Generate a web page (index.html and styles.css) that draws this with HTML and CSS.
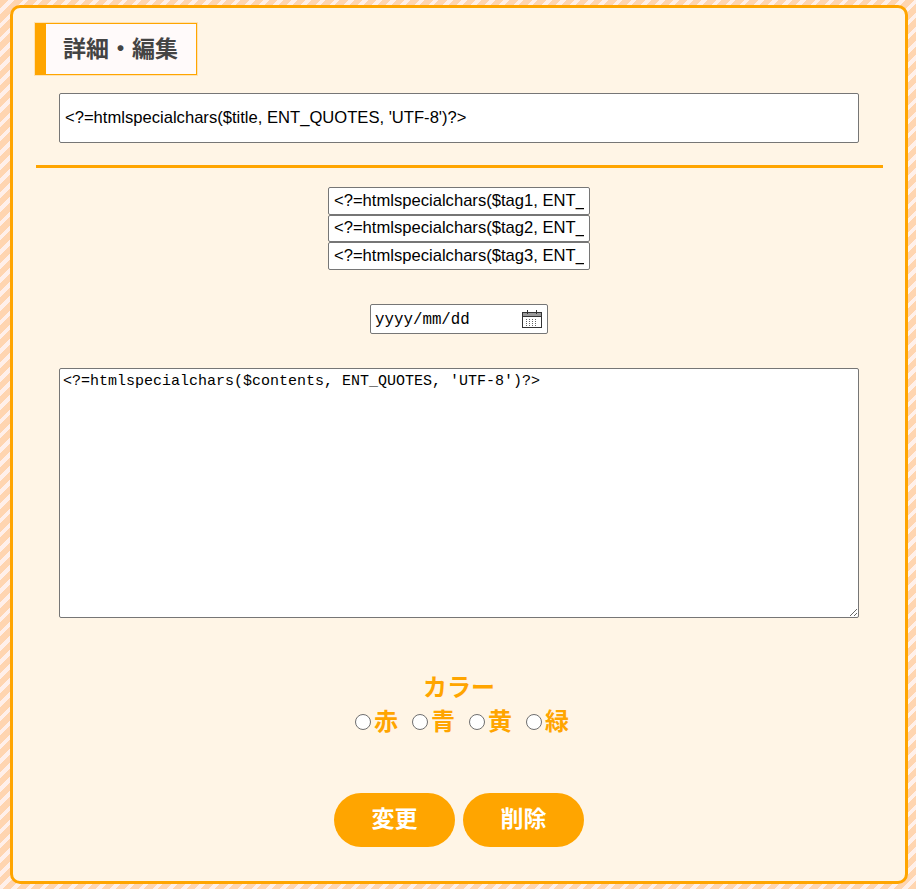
FILE: index.html
```html
<!DOCTYPE html>
<html lang="ja">
<head>
    <meta charset="UTF-8">
    <meta name="viewport" content="width=device-width, initial-scale=1.0">
    <title>詳細・編集</title>
    <link rel="stylesheet" href="styles.css">
</head>
<body>
    <main class="panel">
        <h1 class="page-title">詳細・編集</h1>

        <form class="edit-form">
            <div class="title-row">
                <input class="title-input" type="text" value="<?=htmlspecialchars($title, ENT_QUOTES, 'UTF-8')?>">
            </div>
            <hr class="divider">

            <div class="tags">
                <input class="tag-input" type="text" value="<?=htmlspecialchars($tag1, ENT_QUOTES, 'UTF-8')?>">
                <input class="tag-input" type="text" value="<?=htmlspecialchars($tag2, ENT_QUOTES, 'UTF-8')?>">
                <input class="tag-input" type="text" value="<?=htmlspecialchars($tag3, ENT_QUOTES, 'UTF-8')?>">
            </div>

            <div class="date-row">
                <div class="date-input">
                    <span>yyyy/mm/dd</span>
                    <svg class="calendar-icon" width="20" height="18" viewBox="0 0 20 18" fill="none" stroke="#333" stroke-width="1" shape-rendering="crispEdges">
                        <rect x="0.5" y="2.5" width="19" height="15"/>
                        <path d="M1 3.5h18M1 4.5h18M1 5.5h18" stroke="#999"/>
                        <path d="M1 6.5h18M5.5 0v4M14.5 0v4"/>
                        <path d="M4 9.5h12M4 11.5h12M4 13.5h12M4 15.5h12" stroke-dasharray="1 2" stroke="#666"/>
                    </svg>
                </div>
            </div>

            <div class="contents-row">
                <textarea class="contents-input"><?=htmlspecialchars($contents, ENT_QUOTES, 'UTF-8')?></textarea>
            </div>

            <div class="color-block">
                <p class="color-label">カラー</p>
                <div class="color-options">
                    <label class="color-option"><input type="radio" name="color">赤</label>
                    <label class="color-option"><input type="radio" name="color">青</label>
                    <label class="color-option"><input type="radio" name="color">黄</label>
                    <label class="color-option"><input type="radio" name="color">緑</label>
                </div>
            </div>

            <div class="buttons">
                <button class="action-button" type="button">変更</button>
                <button class="action-button" type="button">削除</button>
            </div>
        </form>
    </main>
</body>
</html>
```

FILE: styles.css
```css
* {
    box-sizing: border-box;
}

html {
    height: 100%;
}

body {
    margin: 0;
    padding: 5px 8px 5px 10px;
    height: 889px;
    overflow: hidden;
    font-family: "Noto Sans CJK JP", "Noto Sans", sans-serif;
    background: repeating-linear-gradient(-45deg, #ffd5b0 0, #ffd5b0 6px, #fff0ea 6px, #fff0ea 10px);
}

.panel {
    height: 879px;
    padding: 15px 22px 0;
    background: #fff5e6;
    border: 3px solid #ffa500;
    border-radius: 10px;
}

.page-title {
    width: 162px;
    height: 52px;
    margin: 0;
    padding: 0 0 4px 17px;
    color: #444;
    font-size: 23px;
    font-weight: 700;
    line-height: 46px;
    background: #fffafa;
    border: 1px solid #ffa500;
    border-left: 11px solid #ffa500;
    box-shadow: 0 0 0 1px #ffe3b5;
}

.title-row {
    margin-top: 18px;
    display: flex;
    justify-content: center;
}

.title-input {
    width: 800px;
    height: 50px;
    padding: 0 5px;
    font-family: "Liberation Sans", Arial, sans-serif;
    font-size: 16.6px;
    color: #000;
    background: #fff;
    border: 1px solid #767676;
    border-radius: 2px;
}

.divider {
    height: 3px;
    margin: 22px 0 0 1px;
    background: #ffa500;
    border: none;
}

.tags {
    margin-top: 19px;
    display: flex;
    flex-direction: column;
    align-items: center;
}

.tag-input {
    width: 262px;
    height: 27.5px;
    padding: 0 5px;
    font-family: "Liberation Sans", Arial, sans-serif;
    font-size: 16.6px;
    color: #000;
    background: #fff;
    border: 1px solid #767676;
    border-radius: 2px;
}

.date-row {
    margin-top: 34px;
    display: flex;
    justify-content: center;
}

.date-input {
    width: 178px;
    height: 30px;
    padding: 2px 5px 0 4px;
    display: flex;
    align-items: center;
    justify-content: space-between;
    font-family: "Liberation Mono", monospace;
    font-size: 15.8px;
    color: #000;
    background: #fff;
    border: 1px solid #767676;
    border-radius: 2px;
}

.calendar-icon {
    margin-top: -2px;
}

.contents-row {
    margin-top: 34px;
    display: flex;
    justify-content: center;
}

.contents-input {
    display: block;
    width: 800px;
    height: 250px;
    padding: 4px 3px 2px;
    font-family: "Liberation Mono", monospace;
    font-size: 15px;
    color: #000;
    background: #fff;
    border: 1px solid #767676;
    border-radius: 2px;
}

.color-block {
    margin-top: 51px;
    text-align: center;
    color: #ffa500;
    font-weight: 700;
}

.color-label {
    margin: 0;
    font-size: 24px;
    line-height: 34px;
}

.color-options {
    display: flex;
    justify-content: center;
    gap: 14px;
    padding-left: 6px;
    font-size: 24px;
    line-height: 34px;
}

.color-option {
    display: flex;
    align-items: center;
}

.color-option input {
    width: 16px;
    height: 16px;
    margin: 5px 3px 0 0;
    appearance: none;
    background: #fff;
    border: 1px solid #6f6f6f;
    border-radius: 50%;
}

.buttons {
    margin-top: 56px;
    display: flex;
    justify-content: center;
    gap: 8px;
}

.action-button {
    width: 121px;
    height: 54px;
    padding: 0 0 5px;
    font-family: inherit;
    font-size: 23px;
    font-weight: 700;
    color: #fff;
    background: #ffa500;
    border: none;
    border-radius: 27px;
}
```
